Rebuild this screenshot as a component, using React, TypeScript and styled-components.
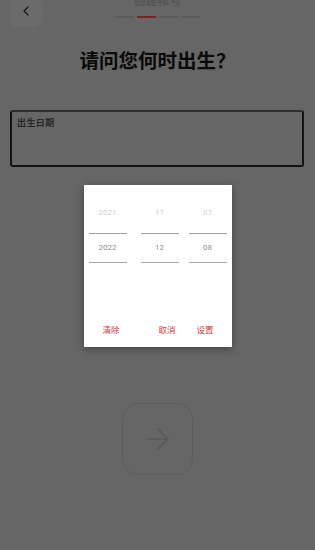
import React from 'react';
import styled, { createGlobalStyle } from 'styled-components';
import { ArrowRight, ChevronLeft } from 'lucide-react';

const GlobalStyle = createGlobalStyle`
  html, body {
    margin: 0;
    padding: 0;
    background: #666666;
  }
  body {
    font-family: Roboto, 'Noto Sans CJK SC', sans-serif;
  }
`;

const Page = styled.div`
  position: relative;
  width: 315px;
  height: 550px;
  overflow: hidden;
  background: #666666;
  display: flex;
  flex-direction: column;
`;

const Header = styled.div`
  display: grid;
  grid-template-columns: 32px 1fr 32px;
  padding: 0 10px;
  margin-top: -5px;
  height: 32px;
`;

const BackButton = styled.div`
  width: 32px;
  height: 32px;
  border-radius: 8px;
  background: #6b6b6b;
  display: flex;
  align-items: center;
  justify-content: center;
  color: #111;
`;

const HeaderCenter = styled.div`
  display: flex;
  flex-direction: column;
  align-items: center;
  margin-top: -2px;
`;

const HeaderTitle = styled.div`
  font-family: 'Noto Sans CJK SC', sans-serif;
  font-size: 12px;
  line-height: 14px;
  font-weight: 700;
  color: #555555;
`;

const Steps = styled.div`
  display: flex;
  gap: 3px;
  margin-top: 8.5px;
`;

const Step = styled.div<{ $active?: boolean }>`
  width: 19px;
  height: 2px;
  background: ${({ $active }) => ($active ? '#8a1c1c' : '#5c5c5c')};
`;

const Title = styled.h1`
  margin: 21px 0 0;
  text-align: center;
  font-family: 'Noto Sans CJK SC', sans-serif;
  font-size: 19.5px;
  line-height: 24px;
  font-weight: 700;
  color: #0a0a0a;
`;

const Field = styled.div`
  margin: 38px 11px 0 10px;
  height: 57px;
  box-sizing: border-box;
  border: 2px solid #111;
  border-top-color: #2e2e2e;
  border-radius: 3px;
  padding: 5px 5px;
`;

const FieldLabel = styled.div`
  font-family: 'Noto Sans CJK SC', sans-serif;
  font-size: 9px;
  line-height: 11px;
  font-weight: 700;
  letter-spacing: 0.4px;
  color: #262626;
`;

const NextButton = styled.div`
  margin: 236px auto 0;
  width: 71px;
  height: 72px;
  box-sizing: border-box;
  border: 1px solid #5d5d5d;
  border-radius: 16px;
  display: flex;
  align-items: center;
  justify-content: center;
  color: #595959;
`;

const Overlay = styled.div`
  position: absolute;
  inset: 0;
  display: flex;
  justify-content: center;
  align-items: flex-start;
  padding-top: 185px;
`;

const Dialog = styled.div`
  width: 148px;
  height: 162px;
  background: #fff;
  box-shadow: 0 2px 8px rgba(0, 0, 0, 0.35);
  display: flex;
  flex-direction: column;
  box-sizing: border-box;
  padding-top: 10px;
`;

const Pickers = styled.div`
  display: flex;
  padding: 0 5px;
`;

const Column = styled.div<{ $gap: number }>`
  width: 38px;
  margin-right: ${({ $gap }) => $gap}px;
  display: flex;
  flex-direction: column;
`;

const Item = styled.div<{ $selected?: boolean }>`
  font-size: 8px;
  text-align: center;
  color: ${({ $selected }) => ($selected ? '#8f8f8f' : '#cfcfcf')};
  height: ${({ $selected }) => ($selected ? '28px' : '36px')};
  line-height: ${({ $selected }) => ($selected ? '28px' : '36px')};
  ${({ $selected }) =>
    $selected &&
    `
    margin-top: 2px;
    border-top: 1px solid #9e9e9e;
    border-bottom: 1.3px solid #a8a8a8;
  `}
`;

const Actions = styled.div`
  margin-top: auto;
  display: flex;
  padding: 0 8px 12px 9px;
`;

const ActionButton = styled.div`
  font-family: 'Noto Sans CJK SC', sans-serif;
  font-size: 8.5px;
  line-height: 12px;
  color: #dc3545;
  padding: 0 10px;
`;

const Spacer = styled.div`
  flex: 1;
`;

const columns = [
  { prev: '2021', value: '2022', gap: 14 },
  { prev: '11', value: '12', gap: 10 },
  { prev: '07', value: '08', gap: 0 },
];

export default function App() {
  return (
    <>
      <GlobalStyle />
      <Page>
        <Header>
          <BackButton>
            <ChevronLeft size={16} strokeWidth={1.6} />
          </BackButton>
          <HeaderCenter>
            <HeaderTitle>创建帐号</HeaderTitle>
            <Steps>
              <Step />
              <Step $active />
              <Step />
              <Step />
            </Steps>
          </HeaderCenter>
          <div />
        </Header>
        <Title>请问您何时出生？</Title>
        <Field>
          <FieldLabel>出生日期</FieldLabel>
        </Field>
        <NextButton>
          <ArrowRight size={34} strokeWidth={1.2} />
        </NextButton>
        <Overlay>
          <Dialog>
            <Pickers>
              {columns.map((c) => (
                <Column key={c.value} $gap={c.gap}>
                  <Item>{c.prev}</Item>
                  <Item $selected>{c.value}</Item>
                </Column>
              ))}
            </Pickers>
            <Actions>
              <ActionButton>清除</ActionButton>
              <Spacer />
              <ActionButton>取消</ActionButton>
              <ActionButton style={{ marginLeft: 1 }}>设置</ActionButton>
            </Actions>
          </Dialog>
        </Overlay>
      </Page>
    </>
  );
}
